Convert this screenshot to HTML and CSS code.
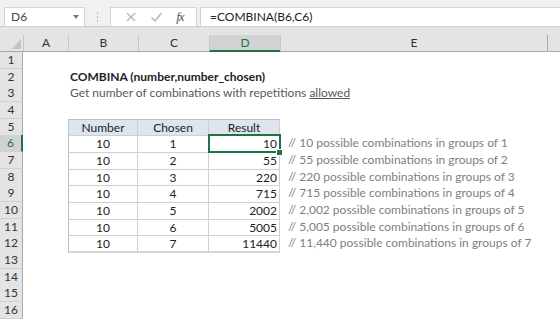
FILE: index.html
```html
<!DOCTYPE html>
<html lang="en">
<head>
    <meta charset="UTF-8">
    <title>COMBINA</title>
    <link rel="stylesheet" href="styles.css">
</head>
<body>
    <div class="fbar">
        <div class="namebox">D6<span class="caret"></span></div>
        <div class="grip"><i></i><i></i><i></i></div>
        <div class="fbtns">
            <svg width="12" height="12" viewBox="0 0 12 12"><path d="M2 2 L10 10 M10 2 L2 10" stroke="#b4b4b4" stroke-width="1.3" fill="none"/></svg>
            <svg width="13" height="12" viewBox="0 0 13 12"><path d="M1.5 6.5 L5 10 L11.5 2" stroke="#b4b4b4" stroke-width="1.4" fill="none"/></svg>
            <span class="fx">fx</span>
        </div>
        <div class="formula">=COMBINA(B6,C6)</div>
    </div>

    <div class="sheet">
        <div class="row heads">
            <div class="corner"><svg width="9" height="10" viewBox="0 0 9 10"><path d="M9 0 L9 10 L0 10 Z" fill="#c2c2c2"/></svg></div>
            <div class="ch">A</div>
            <div class="ch">B</div>
            <div class="ch">C</div>
            <div class="ch sel">D</div>
            <div class="ch">E</div>
            <div class="ch last"></div>
        </div>

        <div class="row"><div class="rh">1</div></div>
        <div class="row"><div class="rh">2</div><div class="c"></div><div class="c title">COMBINA (number,number_chosen)</div></div>
        <div class="row"><div class="rh">3</div><div class="c"></div><div class="c sub">Get number of combinations with repetitions <u>allowed</u></div></div>
        <div class="row"><div class="rh">4</div></div>
        <div class="row">
            <div class="rh">5</div><div class="c"></div>
            <div class="c t th first">Number</div><div class="c t th">Chosen</div><div class="c t th">Result</div>
        </div>
        <div class="row">
            <div class="rh sel">6</div><div class="c"></div>
            <div class="c t first">10</div><div class="c t">1</div><div class="c t num active">10<span class="handle"></span></div>
            <div class="c note">// 10 possible combinations in groups of 1</div>
        </div>
        <div class="row">
            <div class="rh">7</div><div class="c"></div>
            <div class="c t first">10</div><div class="c t">2</div><div class="c t num">55</div>
            <div class="c note">// 55 possible combinations in groups of 2</div>
        </div>
        <div class="row">
            <div class="rh">8</div><div class="c"></div>
            <div class="c t first">10</div><div class="c t">3</div><div class="c t num">220</div>
            <div class="c note">// 220 possible combinations in groups of 3</div>
        </div>
        <div class="row">
            <div class="rh">9</div><div class="c"></div>
            <div class="c t first">10</div><div class="c t">4</div><div class="c t num">715</div>
            <div class="c note">// 715 possible combinations in groups of 4</div>
        </div>
        <div class="row">
            <div class="rh">10</div><div class="c"></div>
            <div class="c t first">10</div><div class="c t">5</div><div class="c t num">2002</div>
            <div class="c note">// 2,002 possible combinations in groups of 5</div>
        </div>
        <div class="row">
            <div class="rh">11</div><div class="c"></div>
            <div class="c t first">10</div><div class="c t">6</div><div class="c t num">5005</div>
            <div class="c note">// 5,005 possible combinations in groups of 6</div>
        </div>
        <div class="row">
            <div class="rh">12</div><div class="c"></div>
            <div class="c t first bottom">10</div><div class="c t bottom">7</div><div class="c t num bottom">11440</div>
            <div class="c note">// 11,440 possible combinations in groups of 7</div>
        </div>
        <div class="row"><div class="rh">13</div></div>
        <div class="row"><div class="rh">14</div></div>
        <div class="row"><div class="rh">15</div></div>
        <div class="row"><div class="rh">16</div></div>
    </div>
</body>
</html>
```

FILE: styles.css
```css
body {
    margin: 0;
    font-family: Lato, "Open Sans", sans-serif;
    font-size: 12px;
    color: #222;
    background-color: #fff;
    overflow: hidden;
}
.fbar {
    height: 27px;
    background-color: #f1f1f1;
    border-bottom: 1px solid #c8c8c8;
    display: flex;
    align-items: flex-start;
    padding-top: 7px;
    box-sizing: border-box;
}
.namebox {
    margin-left: 4px;
    width: 81px;
    height: 20px;
    box-sizing: border-box;
    background-color: #fff;
    border: 1px solid #d4d4d4;
    padding-left: 6px;
    line-height: 18px;
    color: #444;
    display: flex;
    justify-content: space-between;
    align-items: center;
}
.caret {
    width: 0;
    height: 0;
    border-left: 3.5px solid transparent;
    border-right: 3.5px solid transparent;
    border-top: 4px solid #777;
    margin-right: 5px;
}
.grip {
    width: 25px;
    height: 20px;
    display: flex;
    flex-direction: column;
    align-items: center;
    justify-content: center;
    gap: 2px;
}
.grip i {
    width: 1px;
    height: 2px;
    background-color: #b8b8b8;
}
.fbtns {
    width: 87px;
    height: 20px;
    box-sizing: border-box;
    background-color: #fff;
    border: 1px solid #d4d4d4;
    display: flex;
    align-items: center;
    justify-content: space-around;
    padding: 0 6px 0 8px;
}
.fx {
    font-family: "Liberation Serif", serif;
    font-style: italic;
    font-size: 13px;
    color: #555;
    letter-spacing: -1px;
}
.formula {
    margin-left: 3px;
    flex: 1;
    height: 20px;
    box-sizing: border-box;
    background-color: #fff;
    border: 1px solid #d4d4d4;
    border-right: none;
    padding-left: 9px;
    line-height: 18px;
    color: #222;
}
.row {
    display: grid;
    grid-template-columns: 23px 45px 70px 71px 71px 267px 1fr;
    height: 16.67px;
}
.heads {
    height: 25px;
    background-color: #e4e4e4;
    border-bottom: 1px solid #a9a9a9;
    box-sizing: border-box;
    align-items: end;
}
.corner {
    height: 16px;
    display: flex;
    justify-content: flex-end;
    align-items: flex-end;
    padding: 0 2px 2px 0;
    box-sizing: border-box;
}
.ch {
    height: 16px;
    border-left: 1px solid #c6c6c6;
    text-align: center;
    line-height: 16px;
    font-size: 12px;
    color: #333;
}
.ch.sel {
    background-color: #d2d2d2;
    color: #217346;
    border-bottom: 2px solid #217346;
    height: 17px;
    box-sizing: border-box;
    position: relative;
    top: 1px;
}
.ch.last {
    border-left: 1px solid #a9a9a9;
}
.rh {
    background-color: #e4e4e4;
    border-right: 1px solid #a9a9a9;
    border-bottom: 1px solid #d0d0d0;
    box-sizing: border-box;
    text-align: center;
    font-size: 12px;
    line-height: 16px;
    color: #333;
}
.rh.sel {
    background-color: #d2d2d2;
    color: #217346;
    border-right: 2px solid #217346;
}
.c {
    white-space: nowrap;
    line-height: 16px;
    box-sizing: border-box;
}
.title {
    font-weight: bold;
    padding-left: 2px;
}
.sub {
    color: #595959;
    padding-left: 2px;
}
.sub u {
    text-decoration-color: #595959;
}
.t {
    text-align: center;
    border-right: 1px solid #d0d0d0;
    border-top: 1px solid #d0d0d0;
    color: #222;
}
.t.first {
    border-left: 1px solid #c0c0c0;
}
.t.bottom {
    border-bottom: 2px solid #d6d6d6;
    height: 17.67px;
}
.th {
    background-color: #dde6ef;
    border-top: 1px solid #c0c0c0;
}
.num {
    text-align: right;
    padding-right: 2px;
}
.active {
    position: relative;
    outline: 2px solid #217346;
    outline-offset: -1px;
}
.handle {
    position: absolute;
    right: -4px;
    bottom: -4px;
    width: 5px;
    height: 5px;
    background-color: #217346;
    border: 1px solid #fff;
}
.note {
    color: #808080;
    padding-left: 8px;
}
```
